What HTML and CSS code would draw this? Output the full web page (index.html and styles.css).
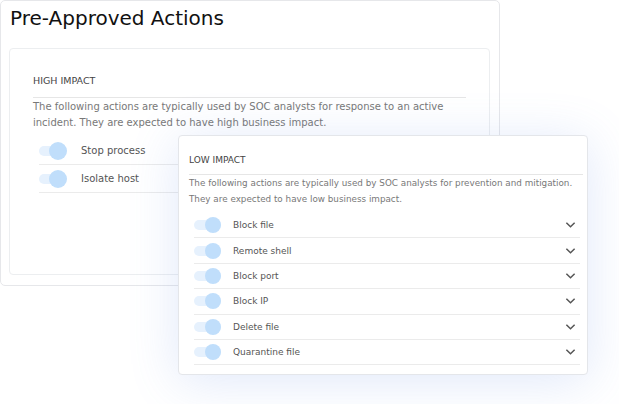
FILE: index.html
```html
<!DOCTYPE html>
<html lang="en">
<head>
    <meta charset="UTF-8">
    <title>Pre-Approved Actions</title>
    <link rel="stylesheet" href="styles.css">
</head>
<body>

<div class="page">
    <div class="main-card">
        <h1>Pre-Approved Actions</h1>
        <div class="section">
            <h2>HIGH IMPACT</h2>
            <p>The following actions are typically used by SOC analysts for response to an active incident. They are expected to have high business impact.</p>
            <ul class="actions">
                <li><span class="toggle"></span><span class="label">Stop process</span></li>
                <li><span class="toggle"></span><span class="label">Isolate host</span></li>
            </ul>
        </div>
    </div>

    <div class="low-card">
        <h2>LOW IMPACT</h2>
        <p>The following actions are typically used by SOC analysts for prevention and mitigation.<br>They are expected to have low business impact.</p>
        <ul class="actions">
            <li><span class="toggle"></span><span class="label">Block file</span><svg class="chevron" viewBox="0 0 12 8"><path d="M1.5 1.5 6 6l4.5-4.5"/></svg></li>
            <li><span class="toggle"></span><span class="label">Remote shell</span><svg class="chevron" viewBox="0 0 12 8"><path d="M1.5 1.5 6 6l4.5-4.5"/></svg></li>
            <li><span class="toggle"></span><span class="label">Block port</span><svg class="chevron" viewBox="0 0 12 8"><path d="M1.5 1.5 6 6l4.5-4.5"/></svg></li>
            <li><span class="toggle"></span><span class="label">Block IP</span><svg class="chevron" viewBox="0 0 12 8"><path d="M1.5 1.5 6 6l4.5-4.5"/></svg></li>
            <li><span class="toggle"></span><span class="label">Delete file</span><svg class="chevron" viewBox="0 0 12 8"><path d="M1.5 1.5 6 6l4.5-4.5"/></svg></li>
            <li><span class="toggle"></span><span class="label">Quarantine file</span><svg class="chevron" viewBox="0 0 12 8"><path d="M1.5 1.5 6 6l4.5-4.5"/></svg></li>
        </ul>
    </div>
</div>

</body>
</html>
```

FILE: styles.css
```css
body {
    margin: 0;
    background-color: #fff;
    font-family: "DejaVu Sans", sans-serif;
    color: #333;
}
.page {
    position: relative;
    width: 619px;
    height: 404px;
}
.main-card {
    width: 498px;
    height: 284px;
    border: 1px solid #e6e7ea;
    border-radius: 5px;
}
h1 {
    margin: 0;
    padding: 5px 0 0 9px;
    height: 42px;
    font-size: 20px;
    font-weight: 400;
    color: #111;
}
.section {
    margin: 0 9px 0 8px;
    height: 225px;
    padding: 0 23px;
    border: 1px solid #eceef0;
    border-radius: 4px;
}
h2 {
    margin: 0;
    font-size: 9px;
    font-weight: 500;
    color: #444;
}
.section h2 {
    padding: 26px 0 11px;
    font-size: 9.5px;
    border-bottom: 1px solid #e6e6e6;
}
p {
    margin: 0;
    font-size: 10px;
    line-height: 16px;
    color: #787878;
}
.section p {
    padding-top: 1px;
}
.actions {
    list-style: none;
    margin: 0;
    padding: 0;
}
.section .actions {
    margin: 6px 0 0 6px;
}
.actions li {
    display: flex;
    align-items: center;
    box-sizing: border-box;
    border-bottom: 1px solid #ebebeb;
}
.section .actions li {
    height: 28px;
}
.toggle {
    position: relative;
    width: 27px;
    height: 10px;
    border-radius: 5px;
    background-color: #e6f1fd;
}
.toggle::after {
    content: "";
    position: absolute;
    right: 0;
    top: -3px;
    width: 16px;
    height: 16px;
    border-radius: 50%;
    background-color: #c0defb;
}
.section .toggle::after {
    right: -1px;
    top: -4px;
    width: 18px;
    height: 18px;
}
.label {
    flex: 1;
    margin-left: 12px;
    font-size: 9px;
    color: #555;
}
.section .label {
    margin-left: 15px;
    font-size: 10px;
}
.low-card {
    position: absolute;
    left: 178px;
    top: 135px;
    width: 394px;
    height: 238px;
    padding: 0 4px 0 10px;
    background-color: #fff;
    border: 1px solid #e4e6ea;
    border-radius: 4px;
    box-shadow: 0 6px 50px rgba(100, 140, 230, 0.2);
}
.low-card h2 {
    padding: 19px 0 9px;
    border-bottom: 1px solid #e6e6e6;
}
.low-card p {
    padding-top: 0;
    font-size: 8.8px;
    white-space: nowrap;
}
.low-card .actions {
    margin: 6px 3px 0 5px;
}
.low-card .actions li {
    height: 25.4px;
}
.chevron {
    width: 11px;
    height: 8px;
    margin-right: 4px;
    fill: none;
    stroke: #555;
    stroke-width: 1.6;
}
```
